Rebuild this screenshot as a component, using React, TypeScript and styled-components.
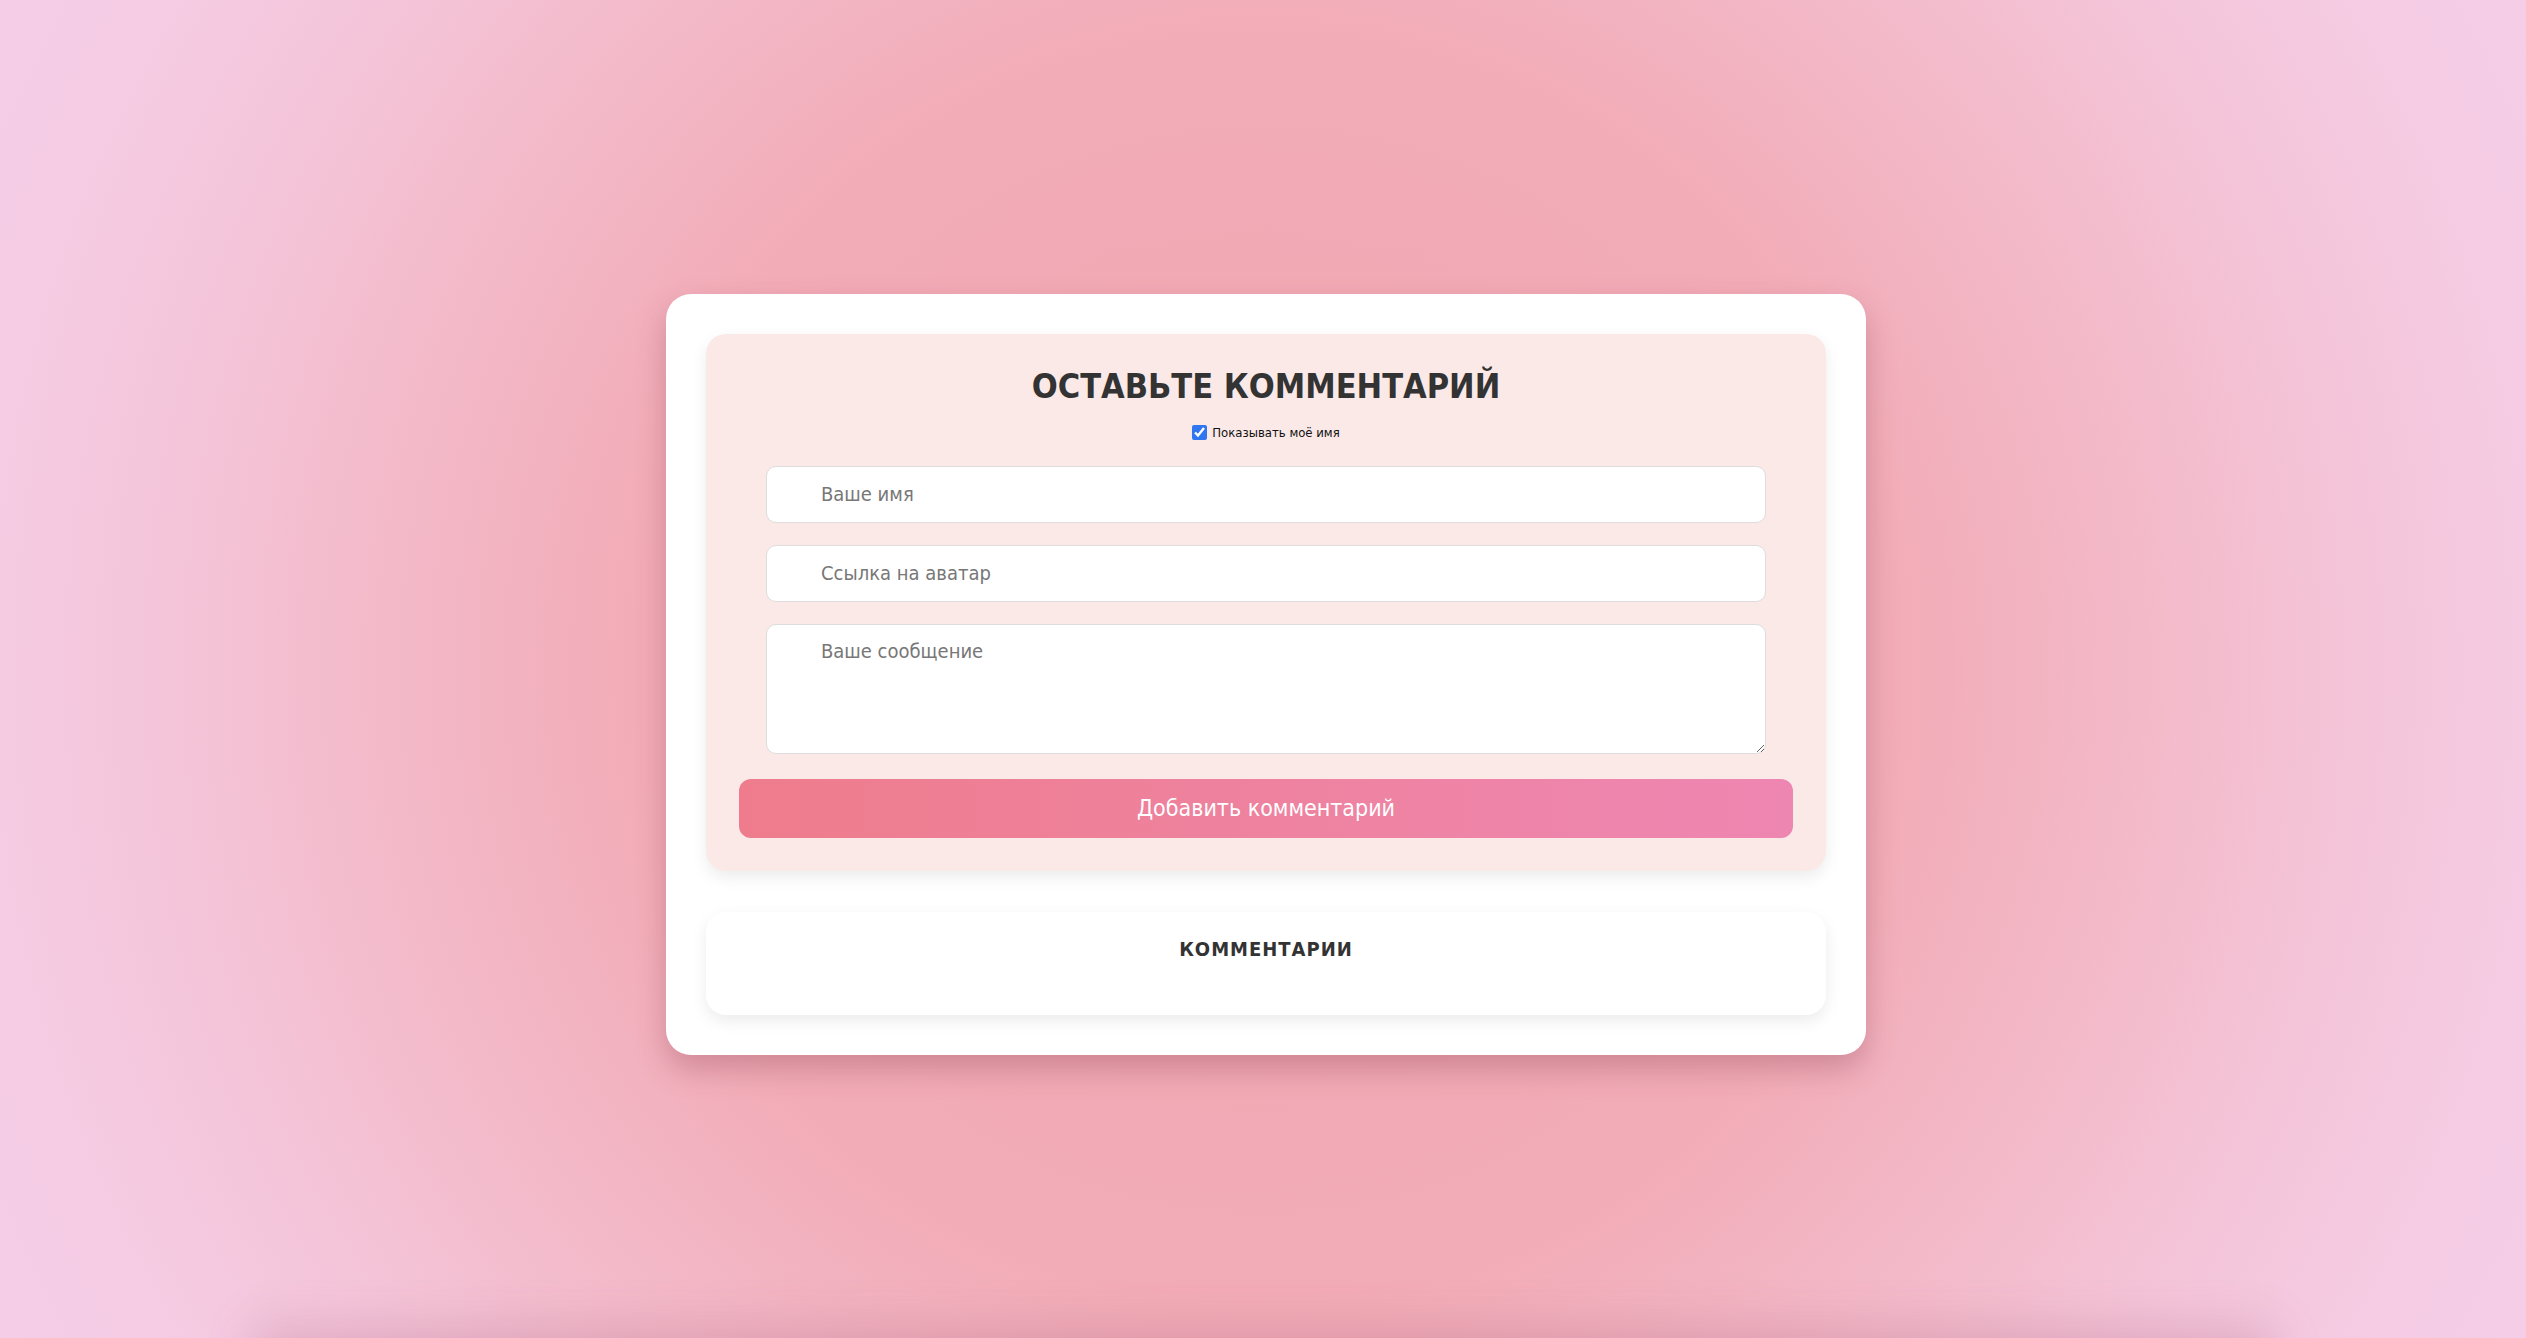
import React from "react";
import styled, { createGlobalStyle } from "styled-components";

const GlobalStyle = createGlobalStyle`
  html, body {
    margin: 0;
    padding: 0;
  }
  body {
    font-family: "DejaVu Sans Condensed", "DejaVu Sans", Tahoma, sans-serif;
    background: radial-gradient(circle at 50% 50%, #f1a7b1 0%, #f2acb7 44%, #f3b8c7 60%, #f4c4d8 76%, #f5cce4 90%, #f5cde6 100%);
    background-attachment: fixed;
    min-height: 100vh;
    overflow: hidden;
  }
`;

const Main = styled.main`
  min-height: 100vh;
  box-sizing: border-box;
  display: flex;
  align-items: center;
  justify-content: center;
  padding: 10px 0 0 6px;
`;

const Card = styled.section`
  width: 1200px;
  box-sizing: border-box;
  background: #ffffff;
  border-radius: 25px;
  padding: 40px;
  display: flex;
  flex-direction: column;
  gap: 41px;
  box-shadow: 0 14px 30px rgba(120, 40, 60, 0.28);
`;

const Panel = styled.div<{ $tone: "rose" | "white" }>`
  background: ${(p) => (p.$tone === "rose" ? "#fbe9e8" : "#ffffff")};
  border-radius: 20px;
  box-shadow: 0 6px 16px rgba(0, 0, 0, 0.08);
  display: flex;
  flex-direction: column;
  align-items: center;
`;

const FormPanel = styled(Panel)`
  padding: 32px 33px 33px;
`;

const CommentsPanel = styled(Panel)`
  height: 103px;
  box-sizing: border-box;
  padding-top: 25px;
`;

const Title = styled.h2`
  margin: 0;
  font-size: 34px;
  line-height: 40px;
  font-weight: 700;
  color: #333333;
  font-family: "DejaVu Sans Condensed", "DejaVu Sans", sans-serif;
`;

const SubTitle = styled.h3`
  margin: 0;
  font-size: 20px;
  line-height: 24px;
  font-weight: 700;
  color: #333333;
  letter-spacing: 1px;
  font-family: "DejaVu Sans Condensed", "DejaVu Sans", sans-serif;
`;

const CheckRow = styled.label`
  margin-top: 18px;
  height: 18px;
  display: flex;
  align-items: center;
  gap: 5px;
  font-size: 13px;
  color: #111111;
  font-family: "DejaVu Sans Condensed", "DejaVu Sans", sans-serif;
`;

const Check = styled.input`
  margin: 0;
  width: 15px;
  height: 15px;
  accent-color: #2f76f0;
`;

const Field = styled.input<{ $gap?: number }>`
  box-sizing: border-box;
  width: 1000px;
  height: 57px;
  margin-top: ${(p) => p.$gap ?? 22}px;
  border: 1px solid #dddddd;
  border-radius: 10px;
  background: #ffffff;
  padding: 0 20px 0 54px;
  font-size: 20px;
  font-family: "DejaVu Sans Condensed", "DejaVu Sans", sans-serif;
  color: #333;
  outline: none;
  &::placeholder {
    color: #777777;
  }
`;

const Message = styled.textarea`
  box-sizing: border-box;
  width: 1000px;
  height: 130px;
  margin-top: 22px;
  border: 1px solid #dddddd;
  border-radius: 10px;
  background: #ffffff;
  padding: 14px 20px 14px 54px;
  font-size: 20px;
  line-height: 24px;
  font-family: "DejaVu Sans Condensed", "DejaVu Sans", sans-serif;
  color: #333;
  outline: none;
  resize: vertical;
  &::placeholder {
    color: #777777;
  }
`;

const SubmitButton = styled.button`
  box-sizing: border-box;
  align-self: stretch;
  height: 59px;
  margin-top: 25px;
  border: none;
  border-radius: 12px;
  background: linear-gradient(90deg, #ee7c8c 0%, #ee83a3 60%, #ee86b2 100%);
  color: #ffffff;
  font-size: 23px;
  font-family: "DejaVu Sans Condensed", "DejaVu Sans", sans-serif;
  cursor: pointer;
`;

const Footer = styled.footer`
  width: 80%;
  height: 200px;
  margin: 0 auto;
  box-shadow: 0 -10px 45px rgba(150, 70, 100, 0.22);
`;

export default function App() {
  return (
    <>
      <GlobalStyle />
      <Main>
        <Card>
          <FormPanel $tone="rose">
            <Title>ОСТАВЬТЕ КОММЕНТАРИЙ</Title>
            <CheckRow>
              <Check type="checkbox" defaultChecked />
              Показывать моё имя
            </CheckRow>
            <Field $gap={24} type="text" placeholder="Ваше имя" />
            <Field type="text" placeholder="Ссылка на аватар" />
            <Message placeholder="Ваше сообщение" />
            <SubmitButton type="button">Добавить комментарий</SubmitButton>
          </FormPanel>
          <CommentsPanel $tone="white">
            <SubTitle>КОММЕНТАРИИ</SubTitle>
          </CommentsPanel>
        </Card>
      </Main>
      <Footer />
    </>
  );
}
